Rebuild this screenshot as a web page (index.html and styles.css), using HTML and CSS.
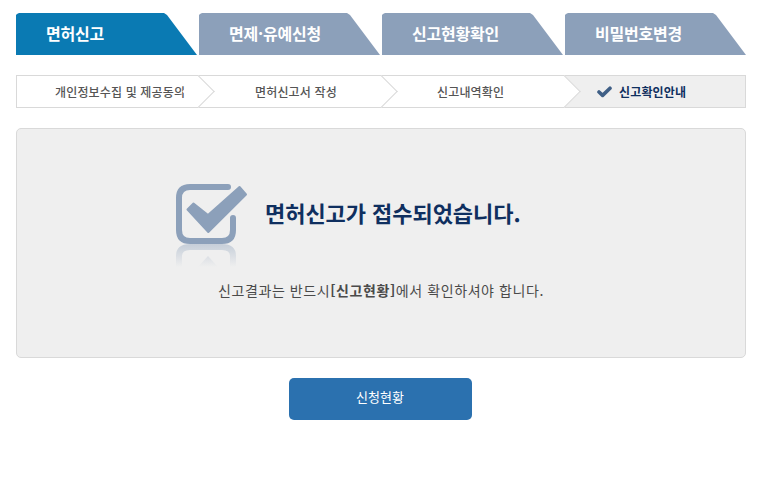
FILE: index.html
```html
<!DOCTYPE html>
<html lang="ko">
<head>
    <meta charset="UTF-8">
    <meta name="viewport" content="width=device-width, initial-scale=1.0">
    <title>면허신고</title>
    <link rel="stylesheet" href="styles.css">
</head>
<body>
    <ul class="tabs">
        <li class="tab active">면허신고</li>
        <li class="tab">면제·유예신청</li>
        <li class="tab">신고현황확인</li>
        <li class="tab">비밀번호변경</li>
    </ul>

    <ol class="steps">
        <li class="step first">개인정보수집 및 제공동의</li>
        <li class="step second">면허신고서 작성</li>
        <li class="step">신고내역확인</li>
        <li class="step current">
            <svg class="tick" width="15" height="12" viewBox="0 0 15 12"><path d="M2 6 5.6 9.4 13 2.2" fill="none" stroke="#3f5f86" stroke-width="3.6" stroke-linecap="round" stroke-linejoin="round"/></svg>
            신고확인안내
        </li>
    </ol>

    <div class="panel">
        <div class="headline">
            <svg class="check" width="72" height="88" viewBox="0 0 72 88">
                <defs>
                    <linearGradient id="fade" gradientUnits="userSpaceOnUse" x1="0" y1="60" x2="0" y2="83">
                        <stop offset="0" stop-color="#8ca0ba" stop-opacity="0.42"/>
                        <stop offset="1" stop-color="#8ca0ba" stop-opacity="0"/>
                    </linearGradient>
                </defs>
                <path d="M52 3H14Q3 3 3 14V46Q3 57 14 57H46Q57 57 57 46V34" fill="none" stroke="#8ca0ba" stroke-width="6" stroke-linecap="round"/>
                <path d="M11.5 25.5 17.5 19.5 32 31 63.5 3 70 10.5 32.3 48Z" fill="#8ca0ba" stroke="#8ca0ba" stroke-width="2" stroke-linejoin="round"/>
                <path d="M3 83V72Q3 63 14 63H46Q57 63 57 72V83" fill="none" stroke="url(#fade)" stroke-width="6"/>
                <path d="M22 83 32 72 42 83Z" fill="url(#fade)"/>
            </svg>
            <h1>면허신고가 접수되었습니다.</h1>
        </div>
        <p class="notice">신고결과는 반드시<b>[신고현황]</b>에서 확인하셔야 합니다.</p>
    </div>

    <div class="actions">
        <button class="btn">신청현황</button>
    </div>
</body>
</html>
```

FILE: styles.css
```css
body {
    margin: 0;
    padding: 13px 15px 0 16px;
    background: #fff;
    font-family: "Noto Sans CJK KR", "Liberation Sans", sans-serif;
    color: #444;
}
ul, ol {
    list-style: none;
    margin: 0;
    padding: 0;
}
.tabs {
    display: flex;
    gap: 2px;
}
.tab {
    width: 181px;
    height: 42px;
    padding-left: 30px;
    box-sizing: border-box;
    line-height: 40px;
    font-size: 16px;
    font-weight: 700;
    letter-spacing: -0.2px;
    color: #fff;
    background: #8ca0ba;
    clip-path: polygon(0 2px, 1px 1px, 3px 0, 148px 0, 151px 2px, 181px 42px, 0 42px);
}
.tab.active {
    background: #0a7ab3;
}
.steps {
    display: flex;
    height: 33px;
    margin-top: 20px;
    box-sizing: border-box;
    border: 1px solid #d9d9d9;
}
.step {
    position: relative;
    flex: 0 0 183px;
    display: flex;
    align-items: center;
    gap: 7px;
    padding-left: 56px;
    box-sizing: border-box;
    font-size: 12px;
    font-weight: 500;
    letter-spacing: 0.15px;
    color: #555;
}
.step.first {
    flex-basis: 181px;
    padding-left: 38px;
}
.step.second {
    padding-left: 57px;
}
.step.current {
    flex: 1;
    padding-left: 33px;
    background: #efefef;
    color: #0f2f5f;
    font-weight: 700;
}
.step:not(.first)::before {
    content: "";
    position: absolute;
    left: -11px;
    top: 4px;
    width: 23px;
    height: 23px;
    box-sizing: border-box;
    background: #fff;
    border-top: 1px solid #d9d9d9;
    border-right: 1px solid #d9d9d9;
    transform: rotate(45deg);
}
.tick {
    position: relative;
}
.panel {
    height: 230px;
    margin-top: 20px;
    box-sizing: border-box;
    padding-top: 55px;
    background: #efefef;
    border: 1px solid #d9d9d9;
    border-radius: 5px;
}
.headline {
    display: flex;
    align-items: flex-start;
    padding-left: 159px;
}
.check {
    flex: none;
}
.headline h1 {
    margin: 0 0 0 17px;
    padding-top: 12px;
    font-size: 22px;
    line-height: 32px;
    font-weight: 700;
    letter-spacing: -0.05px;
    color: #0f2f5f;
}
.notice {
    margin: 8px 0 0;
    text-align: center;
    font-size: 14px;
    line-height: 20px;
    letter-spacing: 0.58px;
    color: #4a4a4a;
}
.actions {
    display: flex;
    justify-content: center;
    margin-top: 20px;
    padding-right: 2px;
}
.btn {
    width: 183px;
    height: 42px;
    padding-bottom: 7px;
    border: 0;
    border-radius: 5px;
    background: #2b71af;
    color: #fff;
    font-family: inherit;
    font-size: 13px;
}
```
